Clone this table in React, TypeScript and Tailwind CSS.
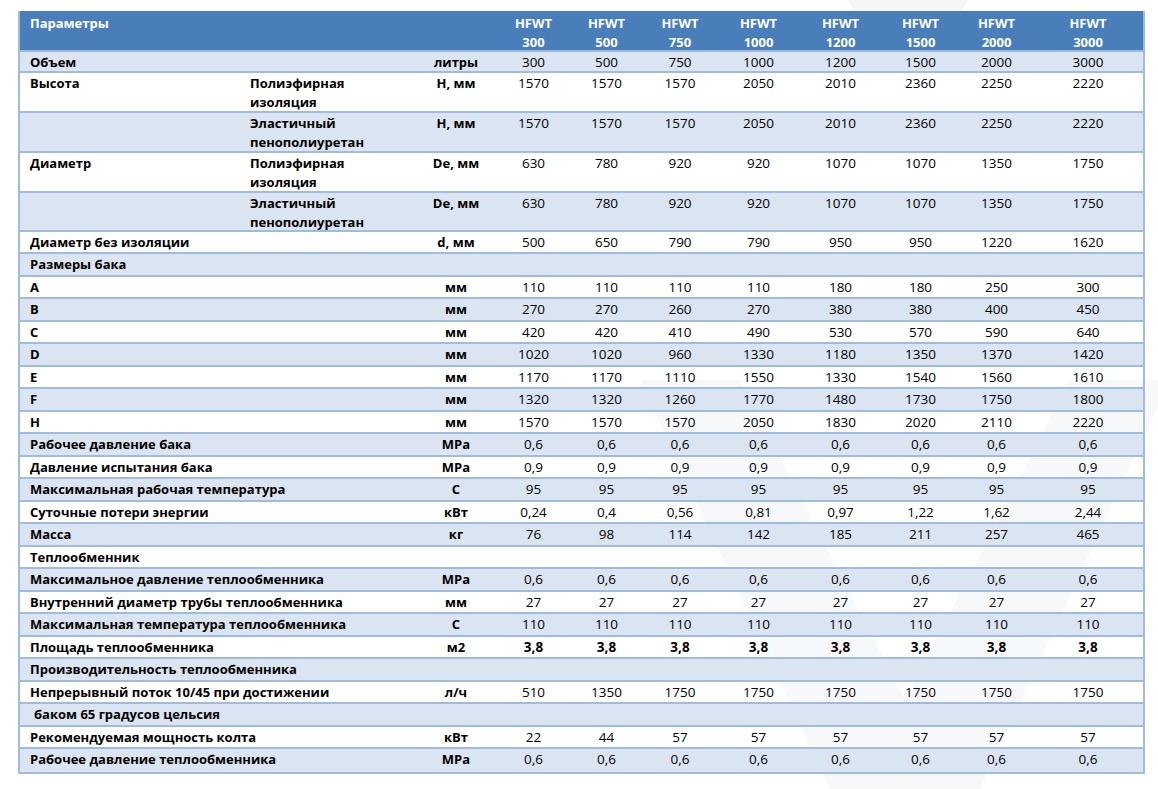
import React from "react";

type Row = {
  a?: string;
  b?: React.ReactNode;
  u?: string;
  v?: string[];
  h: string;
  boldVals?: boolean;
  indent?: boolean;
};

const grid =
  "grid grid-cols-[220px_175px_82px_73px_73px_74px_83px_81px_79px_73px_110px]";

const two = (x: string, y: string) => (
  <>
    {x}
    <br />
    {y}
  </>
);

const rows: Row[] = [
  { a: "Объем", u: "литры", v: ["300", "500", "750", "1000", "1200", "1500", "2000", "3000"], h: "h-[21px]" },
  { a: "Высота", b: two("Полиэфирная", "изоляция"), u: "H, мм", v: ["1570", "1570", "1570", "2050", "2010", "2360", "2250", "2220"], h: "h-[40px]" },
  { b: two("Эластичный", "пенополиуретан"), u: "H, мм", v: ["1570", "1570", "1570", "2050", "2010", "2360", "2250", "2220"], h: "h-[40px]" },
  { a: "Диаметр", b: two("Полиэфирная", "изоляция"), u: "De, мм", v: ["630", "780", "920", "920", "1070", "1070", "1350", "1750"], h: "h-[39.5px]" },
  { b: two("Эластичный", "пенополиуретан"), u: "De, мм", v: ["630", "780", "920", "920", "1070", "1070", "1350", "1750"], h: "h-[39.5px]" },
  { a: "Диаметр без изоляции", u: "d, мм", v: ["500", "650", "790", "790", "950", "950", "1220", "1620"], h: "h-[22px]" },
  { a: "Размеры бака", h: "h-[22.5px]" },
  { a: "A", u: "мм", v: ["110", "110", "110", "110", "180", "180", "250", "300"], h: "h-[22.5px]" },
  { a: "B", u: "мм", v: ["270", "270", "260", "270", "380", "380", "400", "450"], h: "h-[22.5px]" },
  { a: "C", u: "мм", v: ["420", "420", "410", "490", "530", "570", "590", "640"], h: "h-[22.5px]" },
  { a: "D", u: "мм", v: ["1020", "1020", "960", "1330", "1180", "1350", "1370", "1420"], h: "h-[22.5px]" },
  { a: "E", u: "мм", v: ["1170", "1170", "1110", "1550", "1330", "1540", "1560", "1610"], h: "h-[22.5px]" },
  { a: "F", u: "мм", v: ["1320", "1320", "1260", "1770", "1480", "1730", "1750", "1800"], h: "h-[22.5px]" },
  { a: "H", u: "мм", v: ["1570", "1570", "1570", "2050", "1830", "2020", "2110", "2220"], h: "h-[22.5px]" },
  { a: "Рабочее давление бака", u: "MPa", v: ["0,6", "0,6", "0,6", "0,6", "0,6", "0,6", "0,6", "0,6"], h: "h-[22.5px]" },
  { a: "Давление испытания бака", u: "MPa", v: ["0,9", "0,9", "0,9", "0,9", "0,9", "0,9", "0,9", "0,9"], h: "h-[22.5px]" },
  { a: "Максимальная рабочая температура", u: "C", v: ["95", "95", "95", "95", "95", "95", "95", "95"], h: "h-[22.5px]" },
  { a: "Суточные потери энергии", u: "кВт", v: ["0,24", "0,4", "0,56", "0,81", "0,97", "1,22", "1,62", "2,44"], h: "h-[22.5px]" },
  { a: "Масса", u: "кг", v: ["76", "98", "114", "142", "185", "211", "257", "465"], h: "h-[22.5px]" },
  { a: "Теплообменник", h: "h-[22.5px]" },
  { a: "Максимальное давление теплообменника", u: "MPa", v: ["0,6", "0,6", "0,6", "0,6", "0,6", "0,6", "0,6", "0,6"], h: "h-[22.5px]" },
  { a: "Внутренний диаметр трубы теплообменника", u: "мм", v: ["27", "27", "27", "27", "27", "27", "27", "27"], h: "h-[22.5px]" },
  { a: "Максимальная температура теплообменника", u: "C", v: ["110", "110", "110", "110", "110", "110", "110", "110"], h: "h-[22.5px]" },
  { a: "Площадь теплообменника", u: "м2", v: ["3,8", "3,8", "3,8", "3,8", "3,8", "3,8", "3,8", "3,8"], h: "h-[22.5px]", boldVals: true },
  { a: "Производительность теплообменника", h: "h-[22.5px]" },
  { a: "Непрерывный поток 10/45 при достижении", u: "л/ч", v: ["510", "1350", "1750", "1750", "1750", "1750", "1750", "1750"], h: "h-[22.5px]" },
  { a: "баком 65 градусов цельсия", h: "h-[22.5px]", indent: true },
  { a: "Рекомендуемая мощность колта", u: "кВт", v: ["22", "44", "57", "57", "57", "57", "57", "57"], h: "h-[22.5px]" },
  { a: "Рабочее давление теплообменника", u: "MPa", v: ["0,6", "0,6", "0,6", "0,6", "0,6", "0,6", "0,6", "0,6"], h: "h-[25px]" },
];

const models = ["300", "500", "750", "1000", "1200", "1500", "2000", "3000"];

export default function App() {
  return (
    <div
      className="relative w-[1158px] h-[789px] bg-white overflow-hidden text-[13px] leading-[19px] text-black"
      style={{ fontFamily: '"Open Sans", "Noto Sans", sans-serif' }}
    >
      <svg
        className="absolute inset-0"
        width="1158"
        height="789"
        viewBox="0 0 1158 789"
      >
        <polygon
          points="640,380 740,380 905,700 1070,380 1170,380 980,789 830,789"
          fill="#f7f8fa"
        />
        <polygon points="848,0 968,0 935,60 880,60" fill="#f5f6f8" />
      </svg>

      <div className="relative pt-[11px] pl-[18px]">
        <div className="w-[1127px] border-x-2 border-[#9fbbe0]">
          <div className={`${grid} h-[41px] bg-[#4a7ebb] text-white font-bold border-b-2 border-[#9fbbe0]`}>
            <div className="pl-[10px] pt-[3px]">Параметры</div>
            <div />
            <div />
            {models.map((m) => (
              <div key={m} className="text-center pt-[3px]">
                HFWT
                <br />
                {m}
              </div>
            ))}
          </div>
          {rows.map((r, i) => (
            <div
              key={i}
              className={`${grid} ${r.h} border-b-2 border-[#9fbbe0] ${
                i % 2 === 0 ? "bg-[#dbe5f1]" : "bg-transparent"
              }`}
            >
              <div
                className={`${r.indent ? "pl-[14px]" : "pl-[10px]"} pt-[1px] font-bold whitespace-nowrap`}
              >
                {r.a}
              </div>
              <div className="pl-[10px] pt-[1px] font-bold whitespace-nowrap">
                {r.b}
              </div>
              <div className="text-center pt-[1px] font-bold">{r.u}</div>
              {models.map((_, j) => (
                <div
                  key={j}
                  className={`text-center pt-[1px] text-[13.5px] ${r.boldVals ? "font-bold" : ""}`}
                >
                  {r.v ? r.v[j] : ""}
                </div>
              ))}
            </div>
          ))}
        </div>
      </div>
    </div>
  );
}
